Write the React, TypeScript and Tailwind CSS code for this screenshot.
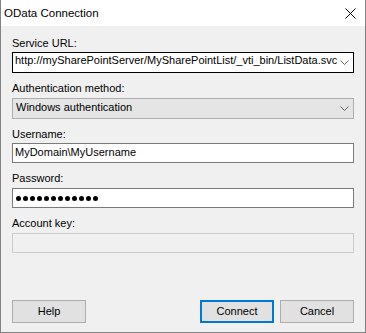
import React from "react";

/**
 * OData Connection dialog
 *
 * WinForms-style dialog: title bar, five labelled fields, and a button row.
 */

function Chevron() {
  return (
    <svg className="mr-[4px] shrink-0" width="9" height="5" viewBox="0 0 9 5" fill="none">
      <polyline points="0.5,0.5 4.5,4.5 8.5,0.5" stroke="#606060" strokeWidth="1" />
    </svg>
  );
}

function Label({ children, className = "" }: { children: React.ReactNode; className?: string }) {
  return <div className={`h-[13px] leading-[13px] whitespace-nowrap ${className}`}>{children}</div>;
}

function Button({ children, primary = false }: { children: React.ReactNode; primary?: boolean }) {
  return (
    <button
      className={`w-[74px] h-[23px] flex items-center justify-center bg-[#e1e1e1] leading-[13px] ${
        primary ? "border-2 border-[#0078d7]" : "border border-[#adadad]"
      }`}
      type="button"
    >
      {children}
    </button>
  );
}

export default function App() {
  return (
    <div className="w-[366px] h-[333px] flex flex-col bg-[#f0f0f0] border-x border-b border-[#838383] font-['Liberation_Sans',Arial,sans-serif] text-[11px] text-black">
      {/* Title bar */}
      <div className="h-[26px] shrink-0 bg-white flex items-start justify-between pl-[3px]">
        <div className="mt-[7px] h-[13px] leading-[13px] text-[11.5px]">OData Connection</div>
        <svg className="mt-[8px] mr-[9px]" width="11" height="11" viewBox="0 0 11 11" fill="none">
          <path d="M0.5 0.5 L10.5 10.5 M10.5 0.5 L0.5 10.5" stroke="#000" strokeWidth="1" />
        </svg>
      </div>

      {/* Form */}
      <div className="flex flex-col px-[11px]">
        <Label className="mt-[11px]">Service URL:</Label>
        <div className="mt-[2px] h-[21px] flex items-start bg-white border border-black">
          <span className="flex-1 pl-[2px] pt-[1px] leading-[13px] whitespace-nowrap overflow-hidden">
            http://mySharePointServer/MySharePointList/_vti_bin/ListData.svc
          </span>
          <div className="self-center">
            <Chevron />
          </div>
        </div>

        <Label className="mt-[9px]">Authentication method:</Label>
        <div className="mt-[3px] h-[21px] flex items-start bg-[#e5e5e5] border border-[#adadad]">
          <span className="flex-1 pl-[3px] pt-[2px] leading-[13px] whitespace-nowrap">
            Windows authentication
          </span>
          <div className="self-center">
            <Chevron />
          </div>
        </div>

        <Label className="mt-[9px]">Username:</Label>
        <div className="mt-[2px] h-[20px] bg-white border border-[#7a7a7a] pl-[2px] pt-[2px] leading-[13px]">
          MyDomain\MyUsername
        </div>

        <Label className="mt-[9px]">Password:</Label>
        <div className="mt-[3px] h-[20px] bg-white border border-[#7a7a7a] pl-[3px] flex items-center gap-[2px]">
          {Array.from({ length: 12 }).map((_, i) => (
            <span key={i} className="w-[5px] h-[5px] rounded-full bg-black" />
          ))}
        </div>

        <Label className="mt-[9px]">Account key:</Label>
        <div className="mt-[3px] h-[20px] bg-[#f0f0f0] border border-[#cccccc]" />

        {/* Buttons */}
        <div className="mt-[47px] flex items-center">
          <Button>Help</Button>
          <div className="flex-1" />
          <Button primary>Connect</Button>
          <div className="w-[6px]" />
          <Button>Cancel</Button>
        </div>
      </div>
    </div>
  );
}
